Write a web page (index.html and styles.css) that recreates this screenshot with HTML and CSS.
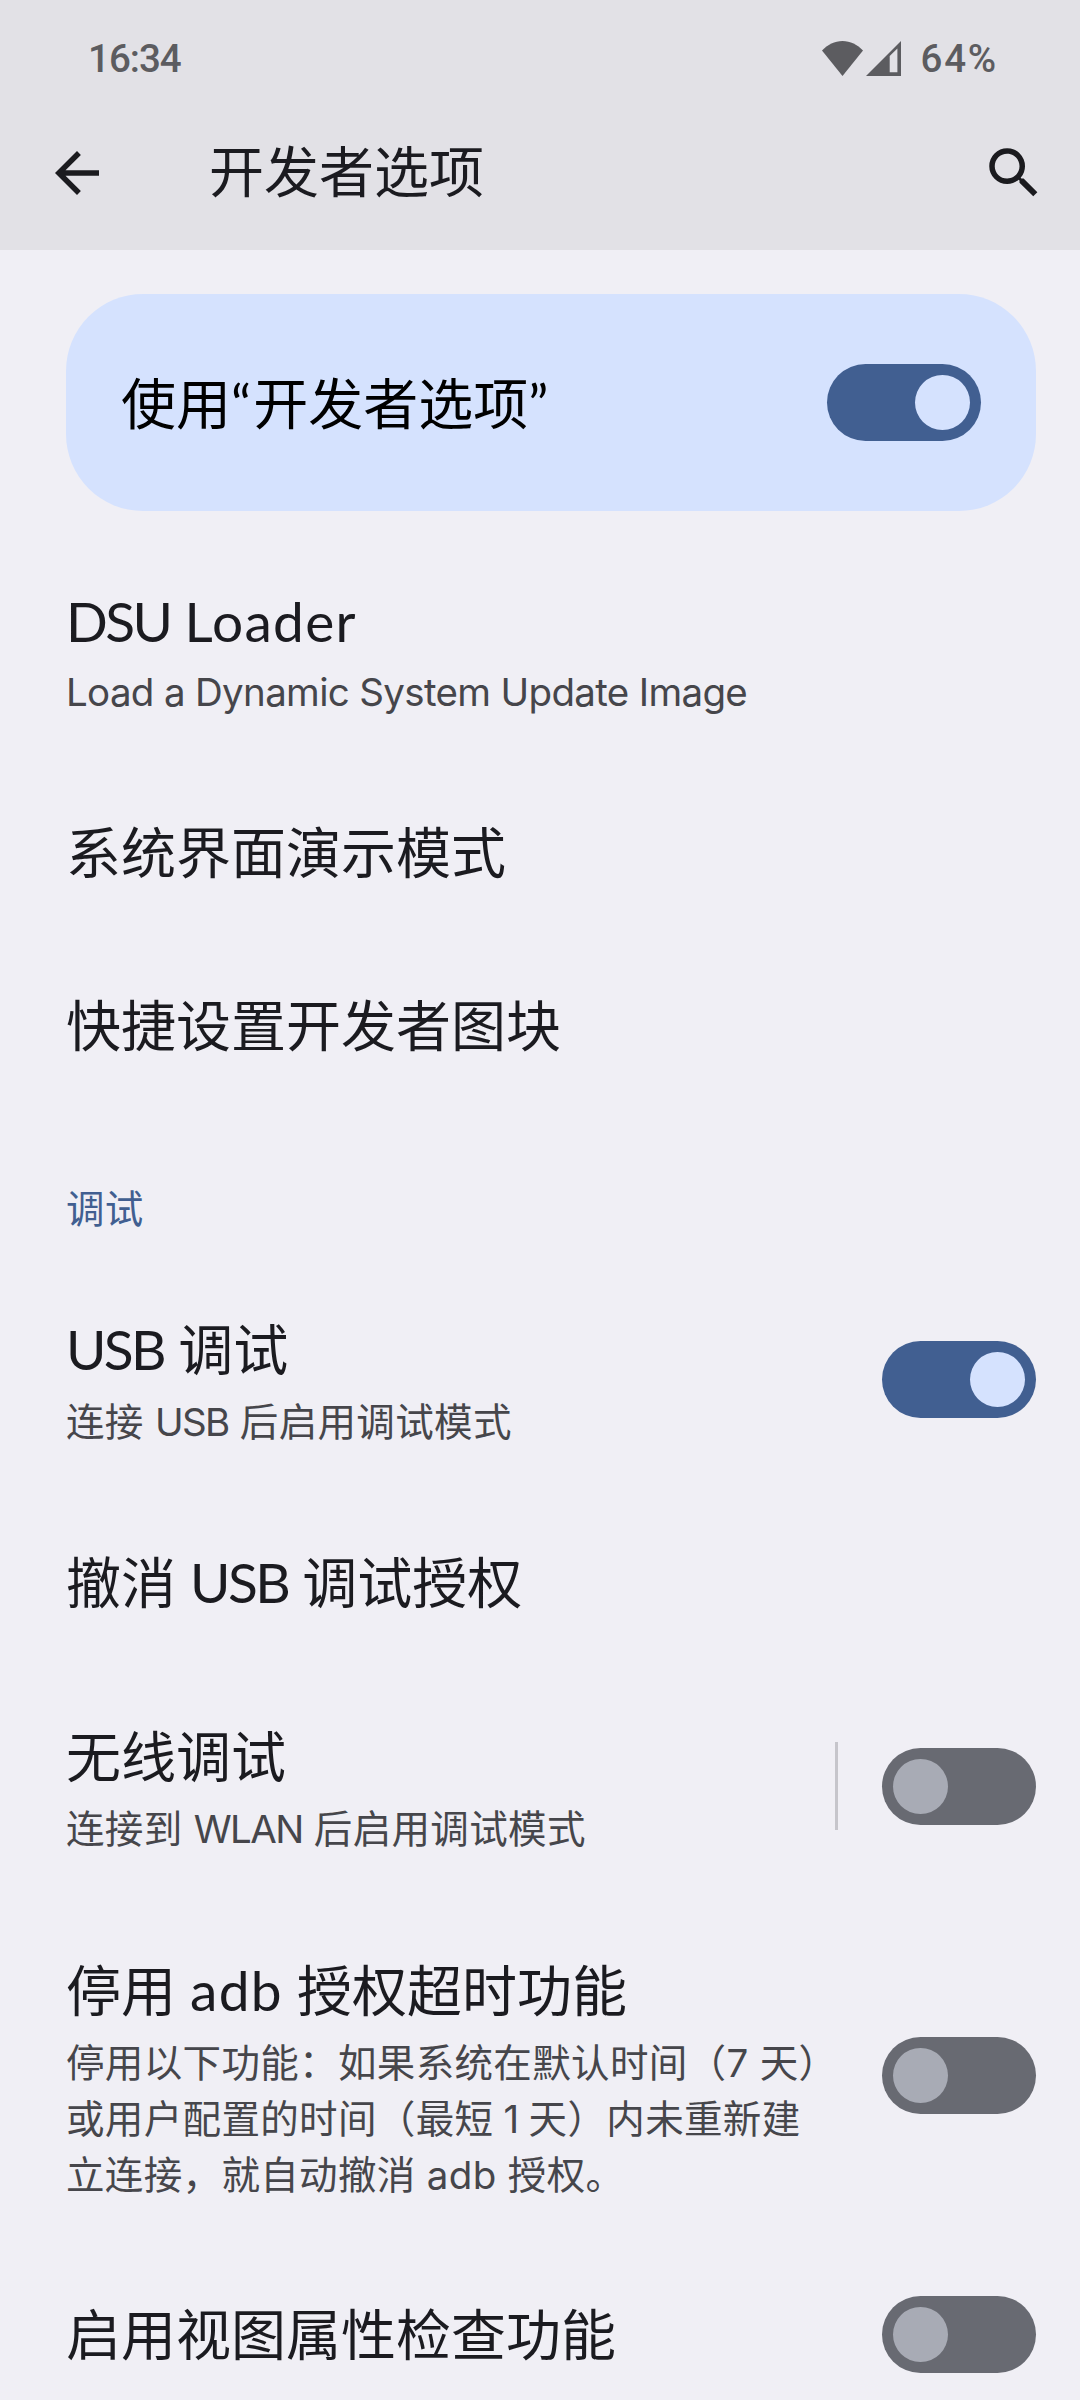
FILE: index.html
```
<!DOCTYPE html>
<html lang="zh-CN">
<head>
<meta charset="utf-8">
<title>开发者选项</title>
<link rel="stylesheet" href="styles.css">
</head>
<body>
<header class="top">
  <div class="status">
    <span class="clock">16:34</span>
    <div class="status-icons">
      <svg class="wifi" viewBox="0 0 41 35"><path d="M20.500 35 0 9.600C5.600 3.600 12.700 0 20.500 0S35.400 3.600 41 9.600Z"/></svg>
      <svg class="signal" viewBox="0 0 35 35"><path fill-rule="evenodd" d="M0 35 35 0V35ZM23.700 15V31.300H31.400V7.500Z"/></svg>
      <span class="battery">64%</span>
    </div>
  </div>
  <div class="appbar">
    <svg class="icon" viewBox="0 0 24 24"><path d="M20 11H7.830l5.590-5.590L12 4l-8 8 8 8 1.410-1.410L7.830 13H20z"/></svg>
    <h1 class="heading">开发者选项</h1>
    <svg class="icon" viewBox="0 0 24 24"><path d="M15.500 14h-.790l-.280-.270A6.471 6.471 0 0 0 16 9.500 6.500 6.500 0 1 0 9.500 16c1.610 0 3.090-.590 4.230-1.570l.270.280v.790l5 4.990L20.490 19l-4.990-5zm-6 0C7.010 14 5 11.990 5 9.500S7.010 5 9.500 5 14 7.010 14 9.500 11.990 14 9.500 14z"/></svg>
  </div>
</header>
<main class="content">
  <section class="main-switch">
    <div class="title">使用<span class="quote">“</span>开发者选项<span class="quote">”</span></div>
    <div class="switch on"></div>
  </section>
  <div class="row dsu">
    <div class="text">
      <div class="title"><span class="caps">DSU</span> <span class="lower">Loader</span></div>
      <div class="summary"><span class="sentence">Load a Dynamic System Update Image</span></div>
    </div>
  </div>
  <div class="row single"><div class="title">系统界面演示模式</div></div>
  <div class="row single"><div class="title">快捷设置开发者图块</div></div>
  <h2 class="category">调试</h2>
  <div class="row double">
    <div class="text">
      <div class="title"><span class="caps">USB</span> 调试</div>
      <div class="summary">连接 <span class="acronym">USB</span> 后启用调试模式</div>
    </div>
    <div class="switch on"></div>
  </div>
  <div class="row single"><div class="title">撤消 <span class="caps">USB</span> 调试授权</div></div>
  <div class="row double">
    <div class="text">
      <div class="title">无线调试</div>
      <div class="summary">连接到 <span class="acronym">WLAN</span> 后启用调试模式</div>
    </div>
    <div class="divider"></div>
    <div class="switch"></div>
  </div>
  <div class="row triple">
    <div class="text">
      <div class="title">停用 <span class="lower">adb</span> 授权超时功能</div>
      <div class="summary">停用以下功能：如果系统在默认时间（7 天）<br>或用户配置的时间（最短<span class="one"> 1 </span>天）内未重新建<br>立连接，就自动撤消 adb 授权。</div>
    </div>
    <div class="switch"></div>
  </div>
  <div class="row single">
    <div class="title">启用视图属性检查功能</div>
    <div class="switch"></div>
  </div>
</main>
</body>
</html>
```
FILE: styles.css
```
* { box-sizing: border-box; }
body {
  margin: 0;
  width: 1080px;
  height: 2400px;
  overflow: hidden;
  background: #f0eff5;
  color: #1b1b20;
  font-family: Lato, "Noto Sans CJK SC", sans-serif;
}
.top { height: 250px; background: #e2e1e6; }
.status {
  display: flex;
  justify-content: space-between;
  align-items: center;
  height: 116px;
  padding: 0 82px 0 88px;
  color: #5c5c60;
  font-family: Roboto, sans-serif;
  font-size: 38.5px;
  font-weight: 500;
}
.clock { letter-spacing: -1px; }
.battery { letter-spacing: 1.8px; }
.status-icons { display: flex; align-items: center; }
.status-icons svg { fill: #5c5c60; }
.wifi { width: 41px; height: 35px; margin-right: 3px; }
.signal { width: 35px; height: 35px; margin-right: 19px; }
.appbar {
  display: flex;
  align-items: center;
  height: 114px;
  padding: 0 33px 0 44px;
}
.icon { width: 66px; height: 66px; flex: none; fill: #1b1b1f; }
.heading {
  flex: 1;
  margin: 0 0 4px 99px;
  font-size: 55px;
  font-weight: 400;
  line-height: 76px;
}
.content { padding: 44px 44px 0 66px; }
.main-switch {
  display: flex;
  align-items: center;
  justify-content: space-between;
  height: 217px;
  margin-bottom: 25px;
  padding: 0 55px;
  border-radius: 77px;
  background: #d5e2fe;
  color: #000;
}
.title { font-size: 55px; line-height: 76px; white-space: nowrap; }
.quote { letter-spacing: 2px; }
.caps { letter-spacing: -2.6px; }
.lower { letter-spacing: 1.3px; }
.summary {
  margin-top: 7px;
  color: #46464b;
  font-family: Inter, "Noto Sans CJK SC", sans-serif;
  font-size: 38.5px;
  letter-spacing: 0.35px;
  line-height: 56px;
  white-space: nowrap;
}
.sentence { letter-spacing: -0.67px; }
.acronym { letter-spacing: -1.6px; }
.one { letter-spacing: -0.7px; }
.row { display: flex; align-items: center; }
.row .text, .row > .title { flex: 1; }
.dsu { height: 230px; }
.dsu .summary { margin-top: 5px; }
.single { height: 173px; }
.single .title { padding-bottom: 2px; }
.double { height: 234px; }
.double .text, .triple .text { padding-top: 3px; }
.triple { height: 345px; }
.category {
  height: 150px;
  margin: 0;
  padding-top: 68px;
  color: #415f91;
  font-size: 38.5px;
  font-weight: 400;
  letter-spacing: 0.35px;
  line-height: 56px;
}
.switch {
  display: flex;
  flex: none;
  width: 154px;
  height: 77px;
  padding: 11px;
  border-radius: 39px;
  background: #686a72;
}
.switch::before {
  content: "";
  width: 55px;
  height: 55px;
  border-radius: 50%;
  background: #a8abb5;
}
.switch.on { justify-content: flex-end; background: #415f91; }
.switch.on::before { background: #d5e2fe; }
.divider { width: 3px; height: 88px; margin-right: 44px; background: #c6c5cb; }
```
